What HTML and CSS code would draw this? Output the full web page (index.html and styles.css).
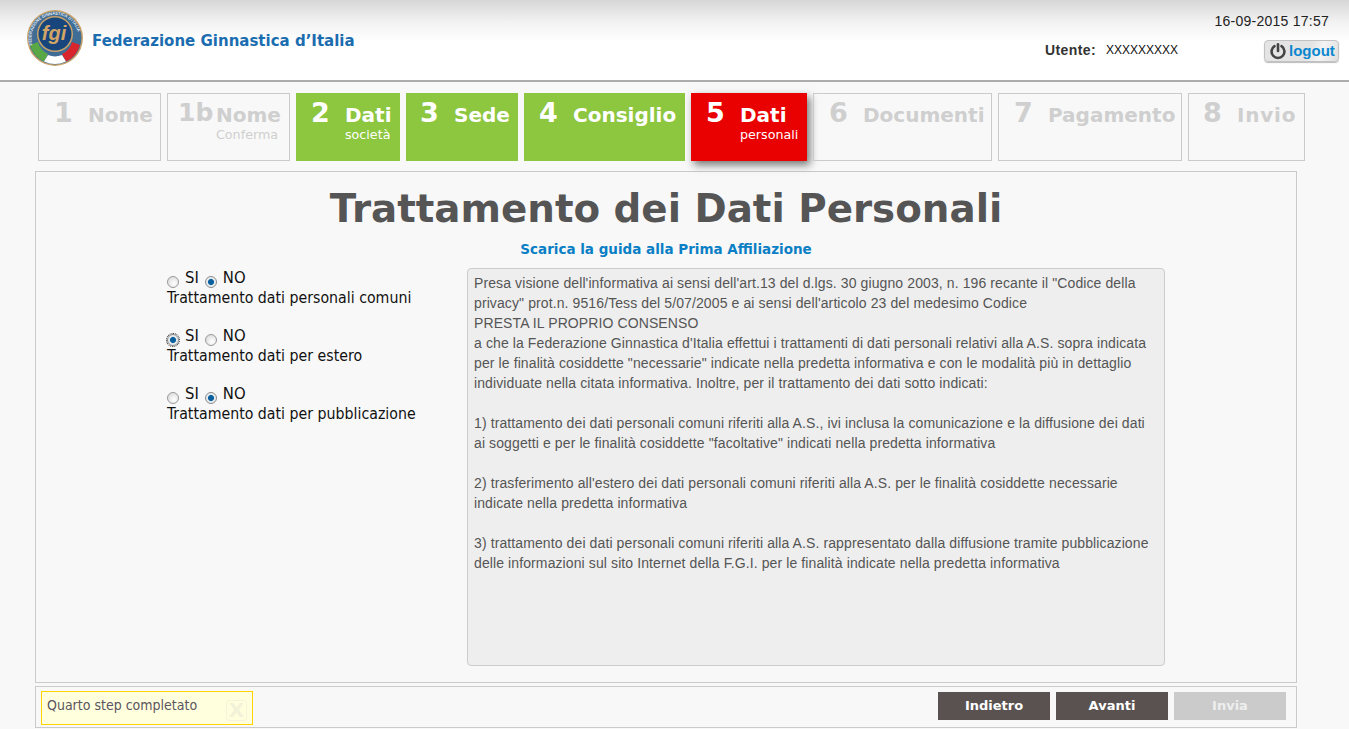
FILE: index.html
```html
<!DOCTYPE html>
<html lang="it">
<head>
<meta charset="utf-8">
<title>Trattamento dei Dati Personali</title>
<link rel="stylesheet" href="styles.css">
</head>
<body>
<header class="top">
  <div class="brand">
    <svg class="logo" viewBox="0 0 58 58" width="58" height="58" aria-hidden="true">
      <defs><path id="ring" d="M6.5 36 A23.5 23.5 0 1 1 51.5 36"/></defs>
      <circle cx="29" cy="29" r="28" fill="#c9a36a"/>
      <circle cx="29" cy="29" r="26.5" fill="#3f6d96"/>
      <path d="M4 36 A26 26 0 0 0 18 52.5 L22 45 A18 18 0 0 1 12 33 Z" fill="#5aa845"/>
      <path d="M54 36 A26 26 0 0 1 40 52.5 L36 45 A18 18 0 0 0 46 33 Z" fill="#d9262c"/>
      <path d="M18 52.5 A26 26 0 0 0 40 52.5 L36 46 A18 18 0 0 1 22 46 Z" fill="#fff"/>
      <circle cx="29" cy="25" r="18" fill="#c9a36a"/>
      <circle cx="29" cy="25" r="16.5" fill="#17457c"/>
      <text class="logo-ring" fill="#e6ebf2"><textPath href="#ring">FEDERAZIONE GINNASTICA D'ITALIA</textPath></text>
      <text class="logo-fgi" x="28" y="31" text-anchor="middle" fill="#d2a567">fgi</text>
    </svg>
    <span class="brand-name">Federazione Ginnastica d’Italia</span>
  </div>
  <div class="session">
    <div class="clock">16-09-2015 17:57</div>
    <div class="user-row">
      <span class="user-label">Utente:</span>
      <span class="user-name">XXXXXXXXX</span>
      <a class="logout" href="#">
        <svg viewBox="0 0 18 18" width="18" height="18" aria-hidden="true">
          <path d="M5.5 4.2 A6.4 6.4 0 1 0 12.5 4.2" fill="none" stroke="#444" stroke-width="2.6" stroke-linecap="round"/>
          <path d="M9 2.2 V9" fill="none" stroke="#444" stroke-width="2.6" stroke-linecap="round"/>
        </svg>
        logout
      </a>
    </div>
  </div>
</header>

<div class="page">
  <nav class="steps">
    <div class="step off w1"><span class="num">1</span><span class="lab"><b>Nome</b></span></div>
    <div class="step off w1b"><span class="num tight">1b</span><span class="lab"><b>Nome</b><small>Conferma</small></span></div>
    <div class="step done w2"><span class="num">2</span><span class="lab"><b>Dati</b><small>società</small></span></div>
    <div class="step done w3"><span class="num">3</span><span class="lab"><b>Sede</b></span></div>
    <div class="step done w4"><span class="num">4</span><span class="lab"><b>Consiglio</b></span></div>
    <div class="step now w5"><span class="num">5</span><span class="lab"><b>Dati</b><small>personali</small></span></div>
    <div class="step off w6"><span class="num">6</span><span class="lab"><b>Documenti</b></span></div>
    <div class="step off w7"><span class="num">7</span><span class="lab"><b>Pagamento</b></span></div>
    <div class="step off w8"><span class="num">8</span><span class="lab"><b>Invio</b></span></div>
  </nav>

  <main class="panel">
    <h1>Trattamento dei Dati Personali</h1>
    <a class="guide" href="#">Scarica la guida alla Prima Affiliazione</a>
    <div class="columns">
      <form class="choices">
        <div class="choice">
          <div class="radios"><input type="radio" name="a"><span>SI</span><input type="radio" name="a" checked><span>NO</span></div>
          <div>Trattamento dati personali comuni</div>
        </div>
        <div class="choice">
          <div class="radios"><input class="focus" type="radio" name="b" checked><span>SI</span><input type="radio" name="b"><span>NO</span></div>
          <div>Trattamento dati per estero</div>
        </div>
        <div class="choice">
          <div class="radios"><input type="radio" name="c"><span>SI</span><input type="radio" name="c" checked><span>NO</span></div>
          <div>Trattamento dati per pubblicazione</div>
        </div>
      </form>
      <div class="notice">Presa visione dell'informativa ai sensi dell'art.13 del d.lgs. 30 giugno 2003, n. 196 recante il "Codice della<br>
privacy" prot.n. 9516/Tess del 5/07/2005 e ai sensi dell'articolo 23 del medesimo Codice<br>
PRESTA IL PROPRIO CONSENSO<br>
a che la Federazione Ginnastica d'Italia effettui i trattamenti di dati personali relativi alla A.S. sopra indicata<br>
per le finalità cosiddette "necessarie" indicate nella predetta informativa e con le modalità più in dettaglio<br>
individuate nella citata informativa. Inoltre, per il trattamento dei dati sotto indicati:<br>
<br>
1) trattamento dei dati personali comuni riferiti alla A.S., ivi inclusa la comunicazione e la diffusione dei dati<br>
ai soggetti e per le finalità cosiddette "facoltative" indicati nella predetta informativa<br>
<br>
2) trasferimento all'estero dei dati personali comuni riferiti alla A.S. per le finalità cosiddette necessarie<br>
indicate nella predetta informativa<br>
<br>
3) trattamento dei dati personali comuni riferiti alla A.S. rappresentato dalla diffusione tramite pubblicazione<br>
delle informazioni sul sito Internet della F.G.I. per le finalità indicate nella predetta informativa</div>
    </div>
  </main>

  <footer class="bar">
    <div class="message"><span class="msg-text">Quarto step completato</span><span class="close">X</span></div>
    <div class="actions">
      <button class="btn" type="button">Indietro</button>
      <button class="btn" type="button">Avanti</button>
      <button class="btn off-btn" type="button">Invia</button>
    </div>
  </footer>
</div>
</body>
</html>
```
FILE: styles.css
```css
* { box-sizing: border-box; }
html, body { margin: 0; height: 100%; overflow: hidden; }
body { background: #f8f8f8; font-family: "Liberation Sans", Arial, sans-serif; color: #000; }

.top {
  height: 82px;
  border-bottom: 2px solid #acacac;
  background: linear-gradient(#d6d6d6 0, #f2f2f2 22px, #fff 42px);
  display: flex;
  justify-content: space-between;
  padding: 9px 10px 0 26px;
}
.brand { display: flex; align-items: flex-start; gap: 8px; }
.logo { display: block; flex: none; }
.logo-ring { font: bold 4.1px "Liberation Sans", sans-serif; }
.logo-fgi { font: italic bold 20px "Liberation Sans", sans-serif; }
.brand-name {
  margin-top: 22px;
  font: bold 15px/20px "DejaVu Sans", sans-serif;
  color: #1b6db0;
}
.session { display: flex; flex-direction: column; align-items: flex-end; }
.clock { margin: 3px 10px 0 0; font: 14px/18px "Liberation Sans", sans-serif; color: #222; letter-spacing: .25px; }
.user-row { display: flex; align-items: flex-start; margin-top: 10px; }
.user-label { font: bold 14px/22px "Liberation Sans", sans-serif; color: #333; margin: -1px 10px 0 0; letter-spacing: .4px; }
.user-name { font: 12px/22px "Liberation Sans", sans-serif; color: #111; margin: -1px 86px 0 0; }
.logout {
  display: flex; align-items: center; gap: 2px;
  width: 75px; height: 22px; padding-left: 4px;
  border: 1px solid #c2c2c2; border-radius: 4px;
  background: linear-gradient(110deg, #e4e4e4 60%, #f4f4f4 75%, #dedede);
  box-shadow: 0 1px 1px #bbb;
  font: bold 15px/18px "Liberation Sans", sans-serif;
  color: #0b87cf; text-decoration: none;
}
.logout svg { flex: none; }

.page { width: 1262px; margin-left: 35px; }

.steps { display: flex; gap: 6px; margin: 11px 0 10px 3px; }
.step {
  display: flex; align-items: flex-start; flex: none;
  height: 68px; padding: 3px 0 0 15px;
  font-family: "DejaVu Sans", sans-serif;
}
.w1 { width: 123px; } .w1b { width: 123px; padding-left: 10px; } .w2 { width: 104px; }
.w3 { width: 112px; padding-left: 14px; } .w4 { width: 161px; } .w5 { width: 116px; }
.w6 { width: 179px; } .w7 { width: 184px; } .w8 { width: 117px; padding-left: 14px; }
.w8 b { letter-spacing: .8px; }
.num { width: 34px; flex: none; font: bold 27px/34px "DejaVu Sans", sans-serif; }
.num.tight { width: 38px; font-size: 25px; }
.lab { display: flex; flex-direction: column; margin-top: 7px; }
.lab b { font-size: 20px; line-height: 25px; }
.lab small { font-size: 12.7px; line-height: 14px; }
.off { border: 1px solid #cbcbcb; color: #cfcfcf; padding-top: 2px; }
.done { background: #8dc63f; color: #fff; }
.now { background: #e90000; color: #fff; box-shadow: 3px 4px 8px #777; }

.panel {
  height: 512px; border: 1px solid #cbcbcb;
  display: flex; flex-direction: column; align-items: center;
  padding-top: 9px;
}
h1 { margin: 0; font: bold 38.8px/54px "DejaVu Sans", sans-serif; color: #555; padding-top: 1px; }
.guide { margin-top: 3px; font: bold 13.5px/20px "DejaVu Sans", sans-serif; color: #0a7fc5; text-decoration: none; }
.columns { display: flex; align-self: stretch; margin: 9px 0 0 131px; }
.choices { width: 300px; flex: none; font: 15.75px/20px "DejaVu Sans Condensed", "DejaVu Sans", sans-serif; font-stretch: condensed; color: #111; }
.choice { margin-bottom: 18px; }
.radios { display: flex; align-items: center; height: 20px; font-size: 16.5px; }
.radios input {
  appearance: none; -webkit-appearance: none; flex: none;
  width: 12px; height: 12px; margin: 8px 6px 0 0; border-radius: 50%;
  border: 1px solid #9a9a9a; background: radial-gradient(circle at 60% 65%, #fff, #d4d4d4);
}
.radios input:checked { background: radial-gradient(circle, #0a5f9e 0 2.6px, #dfe6ea 3.4px, #fff 100%); border-color: #8a8a8a; }
.radios input.focus { outline: 1px dotted #222; outline-offset: 0; }
.radios span { margin-right: 6px; }
.notice {
  width: 698px; height: 398px;
  background: #eee; border: 1px solid #ccc; border-radius: 4px;
  padding: 4px 6px;
  font: 14px/20px "Liberation Sans", sans-serif; color: #555; letter-spacing: .105px;
}

.bar {
  height: 42px; margin-top: 3px; border: 1px solid #cbcbcb;
  display: flex; justify-content: space-between; padding: 4px 10px 0 5px;
}
.message {
  display: flex; width: 212px; height: 34px;
  border: 1px solid #fdd400; background: #ffd;
  padding: 4px 5px;
  font: 14px/18px "DejaVu Sans Condensed", "DejaVu Sans", sans-serif; font-stretch: condensed; color: #5a5560;
}
.msg-text { width: 150px; flex: none; white-space: nowrap; }
.close {
  width: 21px; height: 21px; margin: 4px 0 0 29px;
  border: 1px solid #f4f4d8; border-radius: 3px;
  font: bold 20px/19px "DejaVu Sans", sans-serif; font-stretch: normal; color: #f2f2d8; text-align: center;
}
.actions { display: flex; gap: 6px; }
.btn {
  width: 112px; height: 28px; margin-top: 1px; padding: 0; border: 0;
  background: #5a5250; color: #fff;
  font: bold 13px/28px "DejaVu Sans", sans-serif;
}
.off-btn { background: #cbcbcb; color: #eee; }
```
